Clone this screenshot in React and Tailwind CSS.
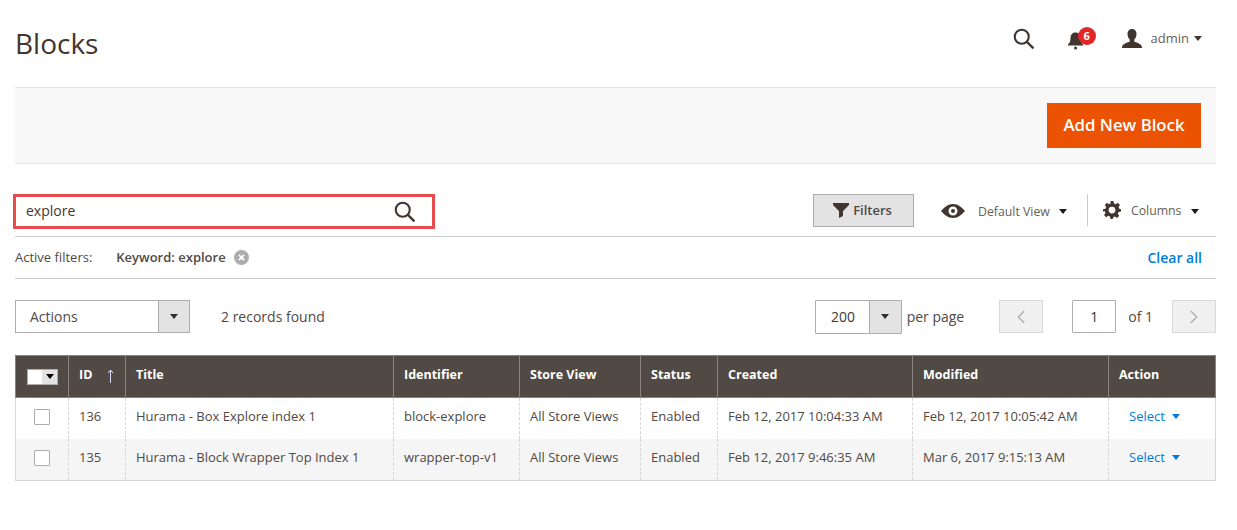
import React from "react";
import { ChevronLeft, ChevronRight } from "lucide-react";

const COLS = "grid-cols-[52px_57px_268px_126px_121px_77px_195px_196px_107px]";

const Caret = ({ className = "border-t-[#303030]" }) => (
  <span className={`inline-block w-0 h-0 border-x-[4.5px] border-x-transparent border-t-[5px] ${className}`} />
);

const SearchIcon = ({ size = 24 }) => (
  <svg width={size} height={size} viewBox="0 0 24 24" fill="none" stroke="#41362f" strokeWidth="2.4">
    <circle cx="10" cy="10" r="8" />
    <path d="M16 16l6.5 6.5" strokeWidth="2.8" strokeLinecap="round" />
  </svg>
);

const rows = [
  {
    id: "136",
    title: "Hurama - Box Explore index 1",
    identifier: "block-explore",
    created: "Feb 12, 2017 10:04:33 AM",
    modified: "Feb 12, 2017 10:05:42 AM",
  },
  {
    id: "135",
    title: "Hurama - Block Wrapper Top Index 1",
    identifier: "wrapper-top-v1",
    created: "Feb 12, 2017 9:46:35 AM",
    modified: "Mar 6, 2017 9:15:13 AM",
  },
];

const headers = ["Title", "Identifier", "Store View", "Status", "Created", "Modified", "Action"];

const App = () => {
  return (
    <div className="w-[1237px] h-[530px] bg-white overflow-hidden pl-[15px] pr-[21px] text-[13px] text-[#41362f] font-['Open_Sans',sans-serif]">
      {/* Page header */}
      <div className="h-[87px] flex items-start justify-between">
        <h1 className="mt-[24px] text-[28px] leading-[38px] font-normal text-[#41362f]">Blocks</h1>
        <div className="flex items-center mt-[28px] mr-[14px]">
          <SearchIcon size={21} />
          <div className="relative ml-[33px] w-[18px] h-[20px]">
            <svg width="17" height="19" viewBox="0 0 17 19" fill="#41362f" className="mt-[2px]">
              <path d="M8.500 1.500c3.400 0 5 2.600 5 5.500 0 3.400 1 5 2.500 6.500v1H1v-1C2.500 12 3.500 10.400 3.500 7c0-2.900 1.600-5.500 5-5.500z" />
              <circle cx="8.500" cy="17" r="1.500" />
            </svg>
            <span className="absolute left-[11px] top-[-2px] w-[18px] h-[18px] rounded-full bg-[#e22626] text-white text-[11px] font-bold leading-[18px] text-center">6</span>
          </div>
          <svg width="20" height="20" viewBox="0 0 20 20" fill="#41362f" className="ml-[37px]">
            <path d="M10 0c3 0 4.500 2 4.500 5 0 2.500-1 4.500-2.200 5.600v2c1.500 1 7.200 2 7.700 5.400v1H0v-1c.5-3.400 6.200-4.400 7.700-5.400v-2C6.500 9.500 5.500 7.500 5.500 5c0-3 1.500-5 4.500-5z" />
          </svg>
          <span className="ml-[9px] text-[13px] text-[#676056]">admin</span>
          <Caret className="ml-[5px] border-t-[#41362f]" />
        </div>
      </div>

      {/* Action bar */}
      <div className="h-[77px] bg-[#f8f8f8] border-y border-[#e3e3e3] flex items-center justify-end pr-[15px]">
        <button className="w-[154px] h-[45px] pb-[2px] bg-[#eb5202] text-white text-[16.800px] font-semibold">Add New Block</button>
      </div>

      {/* Search and view controls */}
      <div className="h-[73px] border-b border-[#cccccc] flex items-start">
        <div className="mt-[30px] -ml-[2px] w-[422px] h-[35px] border-[3px] border-[#e84b4b] flex items-center justify-between pl-[10px] pr-[17px]">
          <span className="text-[14px] pb-[2px] text-[#41362f]">explore</span>
          <SearchIcon size={21} />
        </div>
        <button className="ml-[378px] mt-[30px] w-[101px] h-[33px] bg-[#e3e3e3] border border-[#adadad] flex items-center justify-center gap-[4px] pr-[2px] text-[13px] font-semibold text-[#514943]">
          <svg width="16" height="15" viewBox="0 0 16 15" fill="#41362f">
            <path d="M0 0h16v2L10 8v5l-4 2V8L0 2z" />
          </svg>
          Filters
        </button>
        <div className="mt-[30px] h-[33px] flex items-center ml-[27px]">
          <svg width="24" height="14" viewBox="0 0 24 14" fill="#41362f">
            <path fillRule="evenodd" d="M12 0c5 0 9 3.500 12 7-3 3.500-7 7-12 7S3 10.500 0 7c3-3.500 7-7 12-7zm0 2.500a4.500 4.500 0 100 9 4.500 4.500 0 000-9zm0 2.500a2 2 0 110 4 2 2 0 010-4z" />
          </svg>
          <span className="ml-[13px] pt-[3px] text-[12.3px] text-[#676056]">Default View</span>
          <Caret className="ml-[9px] mt-[1px] border-t-[#1f1a17]" />
        </div>
        <div className="mt-[30px] ml-[20px] h-[32px] border-l border-[#cccccc] flex items-center pl-[15px]">
          <svg width="18" height="18" viewBox="0 0 24 24" fill="#41362f">
            <path fillRule="evenodd" d="M10 0h4l.7 3.300 2.300 1L19.800 2.400l2.800 2.800-1.900 2.800 1 2.300L24 11v3l-3.300.7-1 2.300 1.900 2.800-2.800 2.800-2.800-1.900-2.300 1L13 24h-3l-.7-3.300-2.300-1-2.800 1.900-2.800-2.800 1.900-2.800-1-2.300L0 14v-3l3.300-.7 1-2.300L2.400 5.200l2.800-2.800L8 4.300l2-1zM12 7.500a4.500 4.500 0 100 9 4.500 4.500 0 000-9z" />
          </svg>
          <span className="ml-[10px] pt-[2px] text-[12.3px] text-[#676056]">Columns</span>
          <Caret className="ml-[10px] mt-[2px] border-t-[#1f1a17]" />
        </div>
      </div>

      {/* Active filters */}
      <div className="h-[42px] border-b border-[#cccccc] flex items-center">
        <span className="text-[13px] text-[#514943]">Active filters:</span>
        <span className="ml-[24px] text-[13px] font-semibold text-[#514943]">Keyword: explore</span>
        <span className="ml-[8px] w-[15px] h-[15px] rounded-full bg-[#adadad] flex items-center justify-center">
          <svg width="7" height="7" viewBox="0 0 8 8" stroke="#fff" strokeWidth="2">
            <path d="M1 1l6 6M7 1L1 7" />
          </svg>
        </span>
        <a className="ml-auto mr-[14px] text-[14px] font-semibold text-[#007bdb]">Clear all</a>
      </div>

      {/* Mass actions and pagination */}
      <div className="h-[76px] flex items-start pt-[21px]">
        <div className="w-[175px] h-[33px] border border-[#adadad] flex">
          <span className="flex-1 pl-[14px] text-[14px] leading-[31px] text-[#514943]">Actions</span>
          <span className="w-[31px] bg-[#e3e3e3] border-l border-[#adadad] flex items-center justify-center">
            <Caret />
          </span>
        </div>
        <span className="ml-[31px] text-[14px] leading-[33px] text-[#514943]">2 records found</span>

        <div className="ml-auto flex items-center h-[33px]">
          <div className="w-[87px] h-[34px] border border-[#adadad] rounded-[1px] flex">
            <span className="flex-1 pl-[2px] text-center text-[14px] leading-[32px] text-[#41362f]">200</span>
            <span className="w-[32px] bg-[#e3e3e3] border-l border-[#adadad] flex items-center justify-center">
              <Caret />
            </span>
          </div>
          <span className="ml-[5px] text-[14px] text-[#514943]">per page</span>
          <button className="ml-[35px] w-[44px] h-[33px] bg-[#f0f0f0] border border-[#d9d9d9] flex items-center justify-center text-[#adadad]">
            <ChevronLeft size={22} strokeWidth={1.5} />
          </button>
          <span className="ml-[29px] w-[44px] h-[33px] border border-[#adadad] rounded-[1px] text-center text-[14px] leading-[31px] text-[#41362f]">1</span>
          <span className="ml-[12px] text-[14px] text-[#514943]">of 1</span>
          <button className="ml-[19px] w-[44px] h-[33px] bg-[#f0f0f0] border border-[#d9d9d9] flex items-center justify-center text-[#adadad]">
            <ChevronRight size={22} strokeWidth={1.5} />
          </button>
        </div>
      </div>

      {/* Grid */}
      <div className="w-[1201px] border border-[#d6d6d6] border-t-0">
        <div className={`grid ${COLS} -mx-px h-[43px] bg-[#514943] border border-[#8a837f] text-white text-[12.5px] font-bold`}>
          <div className="flex items-center pl-[11px]">
            <span className="w-[31px] h-[16px] bg-white flex justify-end border border-[#adadad]">
              <span className="w-[15px] bg-[#e3e3e3] flex items-center justify-center">
                <Caret className="border-t-black" />
              </span>
            </span>
          </div>
          <div className="border-l border-[#8a837f] flex items-center pl-[10px] pb-[2px]">
            ID
            <svg width="7" height="14" viewBox="0 0 7 14" fill="none" stroke="#dcd8ff" strokeWidth="1" className="ml-[15px]">
              <path d="M3.500 14V1M1 4l2.500-3L6 4" />
            </svg>
          </div>
          {headers.map((h) => (
            <div key={h} className="border-l border-[#8a837f] flex items-center pl-[10px] pb-[2px]">
              {h}
            </div>
          ))}
        </div>
        {rows.map((row, i) => (
          <div key={row.id} className={`grid ${COLS} h-[41px] text-[13px] text-[#514943] ${i === 1 ? "bg-[#f5f5f5]" : "bg-white"}`}>
            <div className="flex items-center justify-center pb-[4px]">
              <span className="w-[16px] h-[16px] bg-white border border-[#adadad] rounded-[1px]" />
            </div>
            {[row.id, row.title, row.identifier, "All Store Views", "Enabled", row.created, row.modified].map((v, j) => (
              <div key={j} className="border-l border-dashed border-[#d6d6d6] flex items-center pl-[10px] pb-[4px] whitespace-nowrap">
                {v}
              </div>
            ))}
            <div className="border-l border-dashed border-[#d6d6d6] flex items-center pl-[20px] pb-[4px] text-[#007bdb]">
              Select
              <Caret className="ml-[7px] border-t-[#007bdb]" />
            </div>
          </div>
        ))}
      </div>
    </div>
  );
};

export default App;
